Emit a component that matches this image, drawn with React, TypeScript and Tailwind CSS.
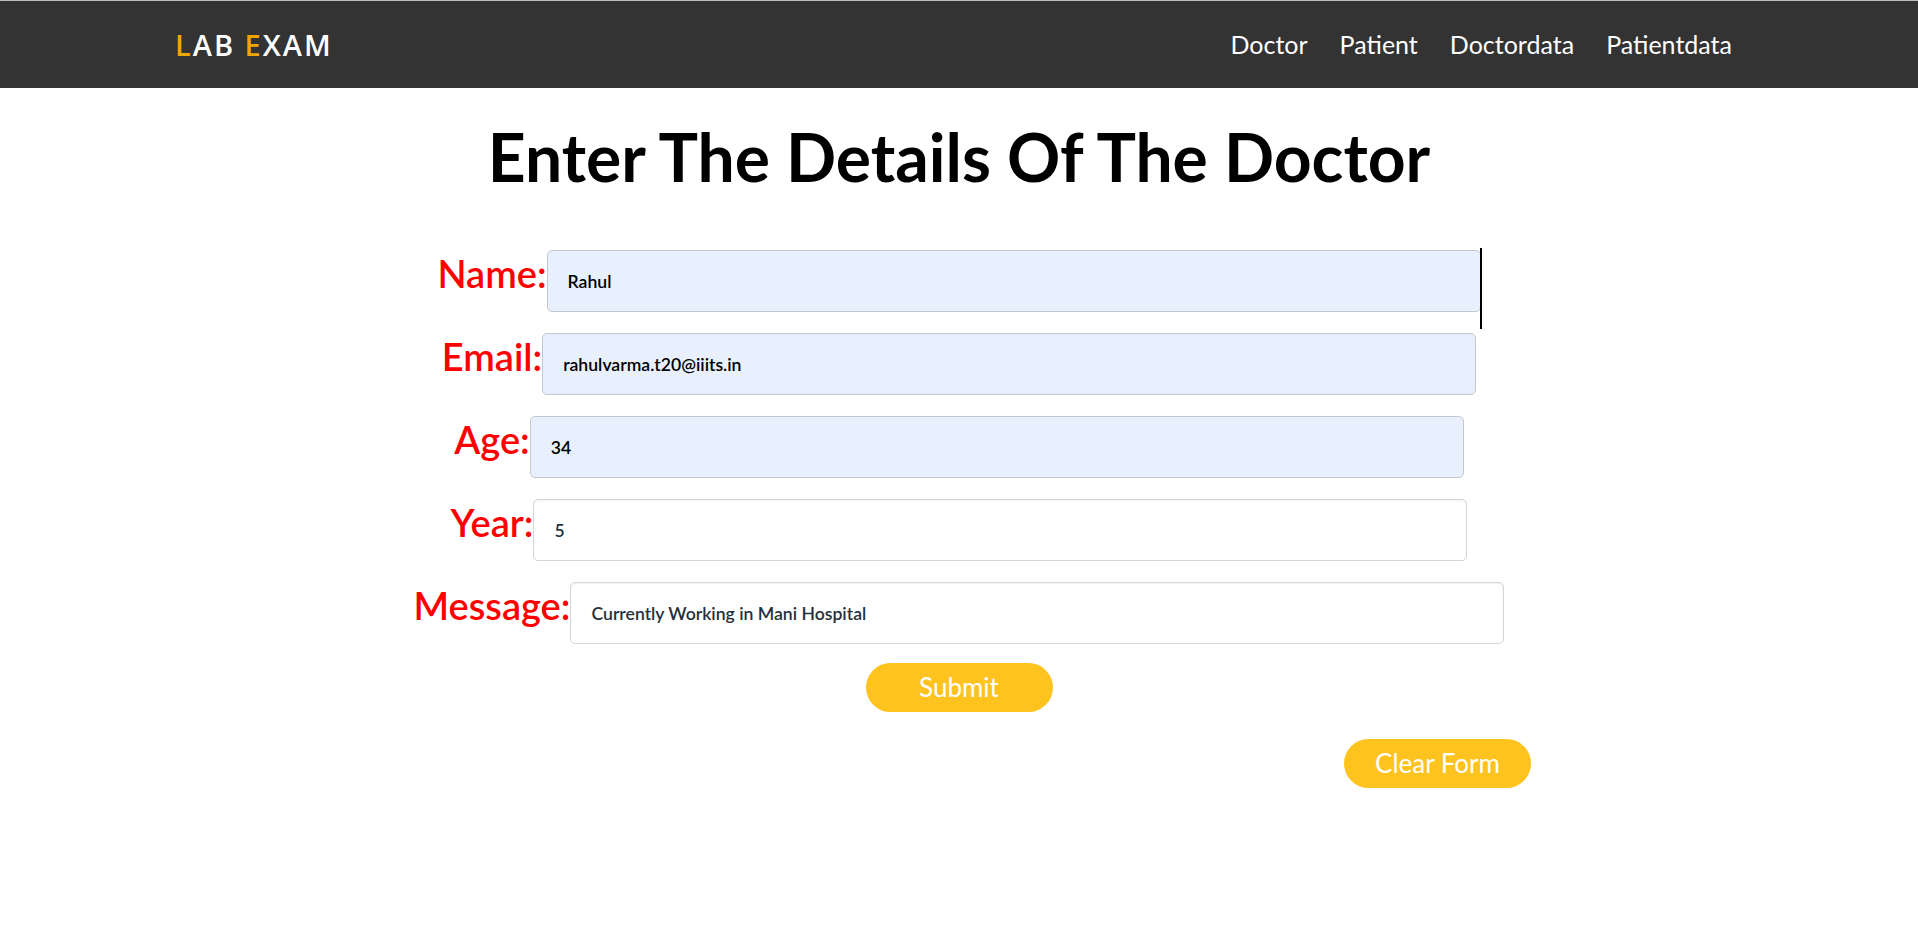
import React from 'react';

const font = { fontFamily: 'Lato, "Noto Sans", sans-serif' };

const fields = [
  { label: 'Name:', value: 'Rahul', filled: true, caret: true },
  { label: 'Email:', value: 'rahulvarma.t20@iiits.in', filled: true },
  { label: 'Age:', value: '34', filled: true },
  { label: 'Year:', value: '5', filled: false },
  { label: 'Message:', value: 'Currently Working in Mani Hospital', filled: false },
];

const App = () => {
  return (
    <div className="min-h-screen bg-white" style={font}>
      {/* Navbar */}
      <nav className="h-[88px] bg-[#333333] border-t border-[#bdbdbd] flex items-center justify-between pl-[175px] pr-[186px]">
        <div className="text-[29px] font-semibold tracking-[2px] text-white" style={{ fontFamily: '"Open Sans", sans-serif' }}>
          <span className="text-[#f0a500]">L</span>AB <span className="text-[#f0a500]">E</span>XAM
        </div>
        <ul className="flex items-center gap-[32px] text-[25px] text-white">
          <li>Doctor</li>
          <li>Patient</li>
          <li>Doctordata</li>
          <li>Patientdata</li>
        </ul>
      </nav>

      {/* Heading */}
      <h1 className="mt-[28px] text-center text-[66px] leading-[82px] font-bold text-black">
        Enter The Details Of The Doctor
      </h1>

      {/* Form */}
      <form className="mt-[52px] flex flex-col gap-[21px]">
        {fields.map((f) => (
          <div key={f.label} className="flex justify-center items-baseline">
            <label className="text-[38px] text-[#ff0000] font-semibold leading-none">{f.label}</label>
            <div className="relative">
              <input
                readOnly
                value={f.value}
                className={`w-[934px] h-[62px] rounded-[5px] border pl-5 text-[17.6px] font-semibold outline-none ${
                  f.filled
                    ? 'bg-[#e8f0fe] border-[#c3c8d0] text-black'
                    : 'bg-white border-[#d6d6d6] text-[#26303b] shadow-[inset_0_1px_2px_rgba(0,0,0,0.06)]'
                }`}
              />
              {f.caret && <span className="absolute right-[-1px] top-[-2px] w-[2px] h-[81px] bg-black" />}
            </div>
          </div>
        ))}
      </form>

      <div className="mt-[19px] flex justify-center">
        <button className="w-[187px] h-[49px] rounded-full bg-[#ffc31f] text-white text-[26px]">Submit</button>
      </div>

      <div className="mt-[27px] flex justify-end pr-[387px]">
        <button className="w-[187px] h-[49px] rounded-full bg-[#ffc31f] text-white text-[26px]">Clear Form</button>
      </div>
    </div>
  );
};

export default App;
